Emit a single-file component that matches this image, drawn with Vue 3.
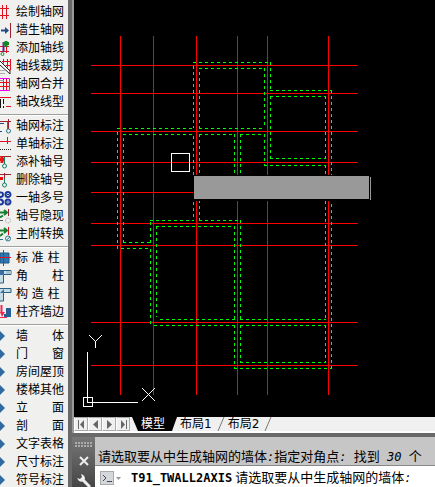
<script setup>
import { ref } from 'vue'

// Colours of icon strokes
const R = '#e01020'
const D = '#a02030'
const N = '#234a84'
const G = '#168060'
const M = '#f000f0'
const B = '#3a6ea5'

// Each icon is a list of [path, stroke, fill, stroke width, dashes]
const axisGrid = [['M0 5.5H9M0 12.5H9M2.5 2V16M6.5 2V16', R]]
const arrow = [['M0 4L5 9L0 14Z', 'none', '#2f6aa0']]
const groups = [
  [
    { label: '绘制轴网', icon: axisGrid },
    { label: '墙生轴网', icon: [['M10.5 2V17', D], ['M1 9.5H6', N, 'none', 2], ['M5 6L9 9.5L5 13Z', 'none', N]] },
    { label: '添加轴线', icon: [['M0 7.5H9M0 12.5H9M6.5 4V14', R], ['M3.5 3V13', '#6a2090', 'none', 2], ['M3 4.5H9M6 2V8', '#108a20', 'none', 3], ['M1 15a1.5 1.5 0 1 0 3 0a1.5 1.5 0 1 0 -3 0', '#108a20']] },
    { label: '轴线裁剪', icon: [['M2 4.5H11M1 8.5H11M4 12.5H11M3.5 2V9M7.5 2V14M10.5 2V14', R], ['M0 13.5H6M0 16.5H5', '#aaa'], ['M0 6L10 16', '#fff', 'none', 4], ['M0 4L10 14V17L0 8', '#222']] },
    { label: '轴网合并', icon: [['M0 3.5H9.5V15.5H0', M], ['M0 7.5H9M0 11.5H9M3.5 4V15M6.5 4V15', R], ['M0 5.5H4', '#999']] },
    { label: '轴改线型', icon: [['M0 4.5H11M6 13.5H11', R], ['M.5 6V15M3.5 6V11M3.5 13V15', '#111']] },
  ],
  [
    { label: '轴网标注', icon: [['M0 4.5H11M8.5 2V12', D], ['M0 6.5H4', N], ['M6.5 14a2 2 0 1 0 4 0a2 2 0 1 0 -4 0M7.5 5V12', '#287890'], ['M0 14.5H2', N]] },
    { label: '单轴标注', icon: [['M0 6.5H11M7.5 2V9', R], ['M0 14.5H12', '#222', 'none', 1, '1 1']] },
    { label: '添补轴号', icon: [['M0 3.5H11', D], ['M0 6.5H4M2 3V10', '#f01010', 'none', 3], ['M4.5 4V10', G], ['M2.5 13a2 2 0 1 0 4 0a2 2 0 1 0 -4 0M4.5 7V11', G]] },
    { label: '删除轴号', icon: [['M0 3.5H11M4.5 2V8', D], ['M0 7.5H3', '#f01010', 'none', 3], ['M2.5 14a2 2 0 1 0 4 0a2 2 0 1 0 -4 0M4.5 7V12', G]] },
    { label: '一轴多号', icon: [['M5.5 5.5a2.5 2.5 0 1 0 5 0a2.5 2.5 0 1 0 -5 0M5.5 13a2.5 2.5 0 1 0 5 0a2.5 2.5 0 1 0 -5 0M0 3.5Q3 3 3 5.5T0 8M0 10.5Q3 10.5 3 13T0 15.5', '#1838a0', 'none', 2], ['M7 5.5H9M7 13H9', '#1838a0']] },
    { label: '轴号隐现', icon: [['M8.5 2V9', D], ['M0 5.5H7M4 3L7 5.5L4 8M0 10.5L3 8.5', '#168030', 'none', 2], ['M0 13.5H3', '#555'], ['M5.5 13.5a2.5 2.5 0 1 0 5 0a2.5 2.5 0 1 0 -5 0', '#999', 'none', 1, '1 1']] },
    { label: '主附转换', icon: [['M8.5 2V10', R], ['M0 5.5H7M4 3L7 5.5L4 8M0 11L3 8.5', '#168030', 'none', 2], ['M0 14.5H3', '#287890'], ['M5.5 13.5a2.5 2.5 0 1 0 5 0a2.5 2.5 0 1 0 -5 0M6.5 15L10 12', '#287890']] },
  ],
  [
    { label: '标 准 柱', icon: [['M0 4H9V14H0Z', '#205888', '#2f78b0'], ['M0 8.5H11M3.5 1V17', R]] },
    { label: '角　　柱', icon: [['M0 3.5H11V7.5H3.5V16H0', '#286088', '#c4dce4'], ['M6 4H11V7H6Z', 'none', '#a8c4cc'], ['M0 4H4V8H0Z', 'none', B]] },
    { label: '构 造 柱', icon: [['M0 3.5H11V7.5H3.5V16H0', '#286088', '#c4dce4'], ['M0 8L4 4V8Z', 'none', B]] },
    { label: '柱齐墙边', icon: [['M6 5H11V14H4V11H6Z', 'none', '#245f96'], ['M1.5 2V10', '#f02850', 'none', 2], ['M0 9H5L2 14Z', 'none', '#f02850'], ['M0 14.5H7', '#f02850']] },
  ],
  ['墙　　体', '门　　窗', '房间屋顶', '楼梯其他', '立　　面', '剖　　面', '文字表格', '尺寸标注', '符号标注']
    .map(label => ({ label, icon: arrow })),
]

// Axis lines of the plan
const axisX = [120, 153, 196, 237, 267, 328]
const axisY = [65, 93, 131, 162, 192, 223, 245, 322, 365]
const axes = axisX.map(x => `M${x}.5 36V395`).join('') +
  axisY.map(y => `M91 ${y}.5H${y === 192 ? 193 : 358}`).join('')

// Wall outlines: [y, x1, x2] and [x, y1, y2]
const wallsH = [
  [62, 193, 271], [68, 199, 265], [90, 270, 332], [96, 270, 326],
  [128, 117, 193], [128, 199, 265], [134, 123, 194], [134, 199, 235], [134, 240, 262],
  [158, 270, 326], [165, 264, 326], [220, 150, 194], [220, 199, 241], [226, 156, 235],
  [242, 123, 151], [248, 121, 151], [319, 160, 235], [319, 240, 326],
  [325, 154, 235], [325, 240, 326], [362, 240, 326], [368, 234, 332],
]
const wallsV = [
  [117, 132, 249], [123, 138, 243], [193, 66, 128], [199, 72, 128],
  [193, 136, 221], [199, 134, 221], [264, 68, 128], [264, 134, 166],
  [270, 62, 90], [270, 96, 159], [234, 134, 175], [240, 134, 175],
  [325, 96, 159], [325, 165, 319], [325, 325, 363], [331, 90, 369],
  [150, 222, 243], [150, 249, 326], [156, 226, 317],
  [234, 226, 319], [240, 220, 319], [234, 325, 369], [240, 325, 363],
]
const walls = wallsH.map(([y, a, b]) => `M${a} ${y}.5H${b}`).join('') +
  wallsV.map(([x, a, b]) => `M${x}.5 ${a}V${b}`).join('')

const navs = [
  { name: '第一个', d: 'M1.5 1V10', t: 'M7 1V10L3 5.5Z' },
  { name: '上一个', d: '', t: 'M7 1V10L2 5.5Z' },
  { name: '下一个', d: '', t: 'M2 1V10L7 5.5Z' },
  { name: '最后一个', d: 'M7.5 1V10', t: 'M2 1V10L6 5.5Z' },
]
const tabs = ['模型', '布局1', '布局2']
const active = ref('模型')
</script>

<template>
  <div class="app">
    <nav class="menu">
      <div v-for="(group, g) in groups" :key="g" class="group">
        <button v-for="item in group" :key="item.label" type="button" class="item">
          <svg class="icon" viewBox="0 0 12 18" aria-hidden="true">
            <path
              v-for="(p, i) in item.icon" :key="i" :d="p[0]" :stroke="p[1]"
              :fill="p[2] || 'none'" :stroke-width="p[3] || 1" :stroke-dasharray="p[4]"
            />
          </svg>
          <span>{{ item.label }}</span>
        </button>
      </div>
    </nav>

    <main class="work">
      <section class="viewport">
        <svg class="drawing" viewBox="74 0 361 417" shape-rendering="crispEdges">
          <path :d="axes" stroke="#f00" />
          <path :d="walls" stroke="#0f0" stroke-dasharray="3 3" />
          <rect x="193" y="175" width="178" height="26" fill="#000" />
          <rect x="194" y="176" width="175" height="23" fill="#999" />
          <path d="M370.5 177V200" stroke="#999" />
          <rect x="171.5" y="153.5" width="18" height="18" fill="none" stroke="#fff" />
          <g stroke="#fff" fill="none">
            <path d="M87.5 352V402.5H138" />
            <rect x="83.5" y="397.5" width="9" height="9" />
            <path d="M89 335L95.5 341.5L102 335M95.5 341V348M142 388L155 401M155 388L142 401" />
          </g>
        </svg>
        <div class="tabbar">
          <button v-for="n in navs" :key="n.name" type="button" class="nav" :aria-label="n.name">
            <svg width="9" height="11" viewBox="0 0 9 11"><path :d="n.d" stroke="#666" /><path :d="n.t" fill="#666" /></svg>
          </button>
          <div class="tabs">
            <button
              v-for="t in tabs" :key="t" type="button" class="tab"
              :class="{ active: t === active }" @click="active = t"
            >
              <span>{{ t }}</span>
              <svg class="slash" width="8" height="14" viewBox="0 0 8 14"><path d="M1 14L7 0" stroke="#777" /></svg>
            </button>
          </div>
        </div>
      </section>

      <section class="command">
        <div class="grip">
          <svg width="17" height="6" viewBox="0 0 17 6" aria-hidden="true">
            <path d="M0 1H17M0 4H17" stroke="#aaa" stroke-width="2" stroke-dasharray="2 1" />
          </svg>
          <button type="button" class="tool" aria-label="关闭">
            <svg width="10" height="10" viewBox="0 0 10 10"><path d="M1 1L9 9M9 1L1 9" stroke="#eee" stroke-width="2" /></svg>
          </button>
          <button type="button" class="tool" aria-label="自定义">
            <svg width="14" height="14" viewBox="0 0 14 14">
              <path d="M6 6L13 13" stroke="#eee" stroke-width="3" />
              <path d="M4 0Q8 1 8 5Q6 9 2 7L0 4L3 5L5 3Z" fill="#eee" />
            </svg>
          </button>
        </div>
        <div class="lines">
          <p class="history">请选取要从中生成轴网的墙体<i>:</i>指定对角点<i>: </i>找到<i> 30 </i>个</p>
          <div class="prompt">
            <button type="button" class="recent" aria-label="最近使用的命令">
              <svg width="21" height="14" viewBox="0 0 21 14">
                <rect x=".5" y=".5" width="13" height="13" fill="#d4d8dc" stroke="#aaa" />
                <path d="M3 4L6 7L3 10M7 10.5H12" stroke="#445" fill="none" />
                <path d="M16 6H21L18.5 9Z" fill="#999" />
              </svg>
            </button>
            <b>T91_TWALL2AXIS</b>
            <span>请选取要从中生成轴网的墙体<i>:</i></span>
          </div>
        </div>
      </section>
    </main>
  </div>
</template>

<style>
body { margin: 0; background: #696969; }
</style>

<style scoped>
.app {
  display: flex;
  height: 100vh;
  overflow: hidden;
  background: #696969;
  color: #000;
  font: 12px/18px "DejaVu Sans", "Noto Sans CJK SC", sans-serif;
}
button {
  margin: 0;
  padding: 0;
  border: 0;
  background: none;
  color: inherit;
  font: inherit;
}
svg { display: block; fill: none; }
.menu {
  flex: 0 0 68px;
  box-sizing: border-box;
  padding-top: 3px;
  overflow: hidden;
  background: #f0f0ee;
}
.group + .group {
  margin-top: 3px;
  padding-top: 2px;
  border-top: 1px solid #a0a0a0;
  box-shadow: inset 0 1px #fff;
}
.item {
  display: flex;
  gap: 4px;
  width: 100%;
  height: 18px;
  white-space: pre;
}
.icon { flex: none; width: 12px; height: 18px; }
.work {
  display: flex;
  flex: 1;
  flex-direction: column;
  min-width: 0;
  margin-left: 4px;
}
.viewport { border-left: 2px solid #999; background: #000; }
.drawing { width: 361px; height: 417px; }
.tabbar {
  display: flex;
  height: 14px;
  border-bottom: 2px solid #fff;
  background: #f0f0f0;
}
.nav {
  display: grid;
  place-items: center;
  box-sizing: border-box;
  width: 14px;
  border: 1px solid #aaa;
  border-left-color: #fff;
}
.tabs { display: flex; margin-left: 2px; }
.tab {
  display: flex;
  align-items: center;
  gap: 5px;
  padding-left: 3px;
  line-height: 14px;
}
.tab.active {
  padding: 0 12px 0 9px;
  background: #000;
  color: #fff;
  clip-path: polygon(0 0, 100% 0, 40px 100%, 6px 100%);
}
.active .slash { display: none; }
.command { display: flex; flex: 1; margin-top: 4px; }
.grip {
  display: flex;
  flex: 0 0 23px;
  flex-direction: column;
  align-items: center;
  gap: 8px;
  padding-top: 5px;
  background: linear-gradient(#777, #444);
}
.lines {
  display: flex;
  flex: 1;
  flex-direction: column;
  min-width: 0;
  background: #fff;
  font: 13px/20px "Noto Sans CJK SC", sans-serif;
  white-space: pre;
}
.lines i, .lines b { font-family: "DejaVu Sans Mono", monospace; font-size: 12px; }
.lines i { font-style: italic; }
.history {
  box-sizing: border-box;
  height: 29px;
  margin: 0;
  padding: 9px 0 0 3px;
  border-bottom: 1px solid #888;
  background: #c6c6c6;
}
.prompt { display: flex; align-items: center; padding: 1px 0 0 5px; }
.prompt b { margin: 0 3px 0 10px; }
</style>
